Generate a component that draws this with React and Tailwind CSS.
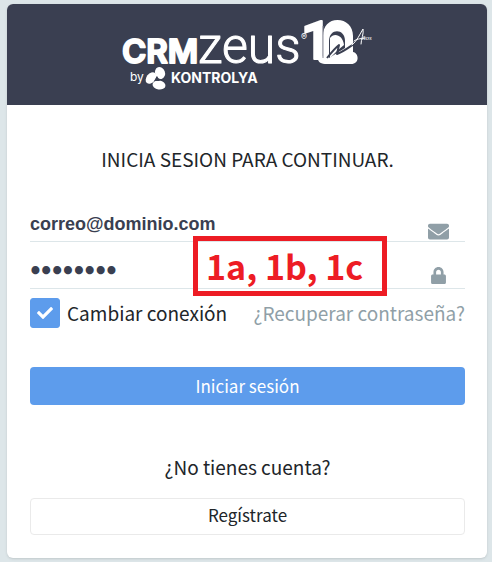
import { useState } from 'react'
import { FaCheck, FaEnvelope, FaLock } from 'react-icons/fa'

const Logo = () => (
    <svg viewBox="0 0 260 77" className="w-[260px] h-[77px] overflow-visible" fill="#fff" role="img" aria-label="CRMzeus by Kontrolya">
        <text x="5" y="47" fontSize="33" fontWeight="600" stroke="#fff" strokeWidth="2" strokeLinejoin="round" fontFamily="Inter, sans-serif">CRM</text>
        <text x="81" y="47" fontSize="50" fontWeight="300" stroke="#fff" strokeWidth="1" strokeLinejoin="round" fontFamily="Roboto, sans-serif">zeus</text>
        <text x="184" y="24" fontSize="9" fontFamily="Inter, sans-serif">®</text>

        {/* anniversary mark */}
        <text x="184" y="43" fontSize="53" fontWeight="700" stroke="#fff" strokeWidth="2" strokeLinejoin="round" fontFamily="Roboto, sans-serif">1</text>
        <path d="M206 20C206 10 212 4 220.500 4C229 4 236 10 236 20V36C242 37 243 48 234 48H210C204 48 201 46 201 43L206 40Z" />
        <path d="M206 10V42" stroke="#8b8d9a" strokeWidth="1" />
        <path d="M212 42V25C212 12 228 12 228 25V32Z" fill="#3a3f51" />
        <path d="M213 42V22C217 16 226 19 227 29L221 34Z" />
        <path d="M210 42C214 37 218 32 222 29L220 38C226 36 231 32 237 28" fill="none" stroke="#3a3f51" strokeWidth="2" strokeLinejoin="round" />
        <path d="M235 29C240 25 243 18 246 13C247 18 244 23 244 28M237 25C241 22 245 23 248 22" fill="none" stroke="#fff" strokeWidth="1" strokeLinecap="round" />
        <text x="245" y="24" fontSize="7" fontStyle="italic" fontFamily="'Liberation Serif', serif">ños</text>

        {/* company line */}
        <text x="13" y="65" fontSize="12" fontFamily="Inter, sans-serif">by</text>
        <ellipse cx="43" cy="57" rx="5" ry="6" transform="rotate(-20 43 57)" />
        <ellipse cx="34" cy="62" rx="4.500" ry="6.500" transform="rotate(38 34 62)" />
        <ellipse cx="42" cy="69" rx="6.500" ry="4.500" transform="rotate(8 42 69)" />
        <path d="M37 65L40 60L43 65Z" fill="#3a3f51" />
        <text x="54" y="67" fontSize="14" fontWeight="700" fontFamily="Inter, sans-serif">KONTROLYA</text>
    </svg>
)

const Field = ({ icon: Icon, iconClass, ...props }) => (
    <div className="flex items-center border-b border-[#dde6e9] h-[47px] pr-4 text-[#909fa7]">
        <input className="flex-1 min-w-0 h-full pt-3 bg-transparent outline-none text-[#3a3f51]" {...props} />
        <Icon className={iconClass} />
    </div>
)

const App = () => {
    const [email, setEmail] = useState('correo@dominio.com')
    const [password, setPassword] = useState('password')
    const [change, setChange] = useState(true)

    return (
        <main className="min-h-screen bg-[#dde6e9] pt-1 pl-[7px] pr-[5px] pb-1 text-[19px] leading-7 text-[#212529] font-['Noto_Sans_CJK_SC',sans-serif]">
            <div className="relative rounded-md bg-white shadow-sm">
                <header className="h-[101px] rounded-t-md bg-[#3a3f51] flex justify-center items-center">
                    <Logo />
                </header>

                <form className="pl-[23px] pr-[22px] pt-10 pb-[23px]" onSubmit={(e) => e.preventDefault()}>
                    <h1 className="text-center mb-[22px]">INICIA SESION PARA CONTINUAR.</h1>

                    <div className="font-['Liberation_Sans',sans-serif] font-bold text-lg">
                        <Field aria-label="Correo" type="email" icon={FaEnvelope} iconClass="size-[21px] mt-[26px]" value={email} onChange={(e) => setEmail(e.target.value)} />
                    </div>
                    <div className="font-['DejaVu_Sans',sans-serif] font-bold text-[17px] [-webkit-text-stroke:2px_#3a3f51]">
                        <Field aria-label="Contraseña" type="password" icon={FaLock} iconClass="size-[17px] mt-5 mr-0.5" value={password} onChange={(e) => setPassword(e.target.value)} />
                    </div>

                    <div className="flex items-center justify-between mt-[9px]">
                        <label className="flex items-center gap-[7px]">
                            <span className="grid size-[30px]">
                                <input type="checkbox" className="col-start-1 row-start-1 appearance-none rounded-[3px] border border-[#5d9cec] checked:bg-[#5d9cec]" checked={change} onChange={(e) => setChange(e.target.checked)} />
                                <FaCheck className="col-start-1 row-start-1 place-self-center size-4 text-white pointer-events-none" />
                            </span>
                            Cambiar conexión
                        </label>
                        <a href="#recuperar" className="text-[#909fa7]">¿Recuperar contraseña?</a>
                    </div>

                    <button type="submit" className="w-full h-[38px] mt-[39px] rounded bg-[#5d9cec] text-white text-[17px]">Iniciar sesión</button>

                    <p className="text-center mt-12 mb-[17px]">¿No tienes cuenta?</p>
                    <a href="#registro" className="flex items-center justify-center h-[37px] pb-1 rounded border border-[#eaeaea] text-[17px]">Regístrate</a>
                </form>

                {/* step callout on top of the fields */}
                <div className="absolute left-[186px] top-[232px] w-[194px] h-[60px] border-5 border-[#ed1c24] flex items-center pl-2 text-[#ed1c24] text-[34px] font-bold">
                    1a, 1b, 1c
                </div>
            </div>
        </main>
    )
}

export default App
